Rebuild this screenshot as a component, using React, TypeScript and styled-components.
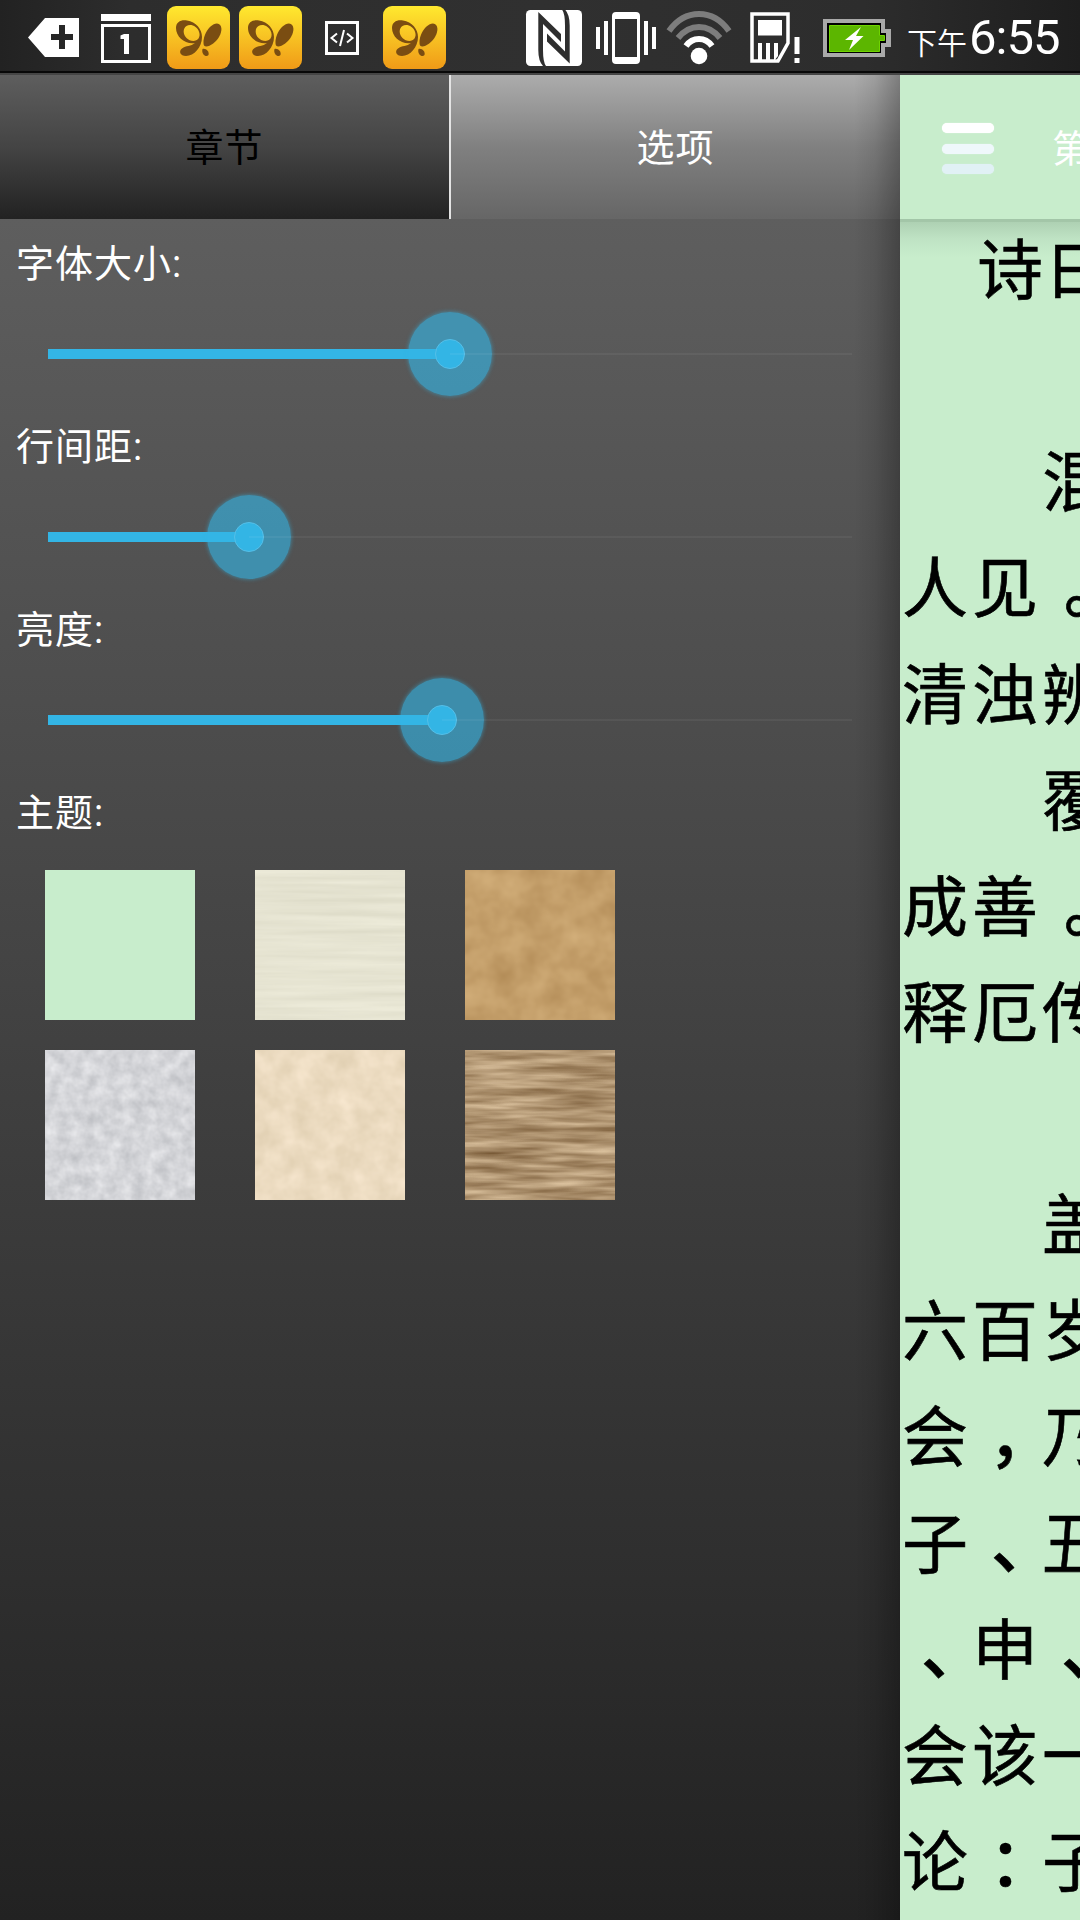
import React from "react";
import styled, { createGlobalStyle } from "styled-components";

const cjk = `Roboto, "Noto Sans CJK SC", sans-serif`;

const Global = createGlobalStyle`
  body { margin: 0; background: #262626; overflow: hidden; }
  * { box-sizing: border-box; }
`;

const Screen = styled.div`
  width: 1080px;
  height: 1920px;
  overflow: hidden;
  display: flex;
  flex-direction: column;
  font-family: ${cjk};
`;

const StatusBar = styled.header`
  height: 75px;
  flex: none;
  display: flex;
  align-items: flex-start;
  background: linear-gradient(90deg, #222 0, #2d2d2d 12%, #303030 50%, #2d2d2d 80%, #1e1e1e 100%);
  box-shadow: inset 0 -2px 0 #454545, inset 0 -4px 0 #080808;
`;

const StatusIcons = styled.svg`
  width: 900px;
  height: 75px;
  flex: none;
`;

const Clock = styled.div`
  flex: 1;
  display: flex;
  align-items: baseline;
  color: #fff;
  height: 75px;
  padding: 2px 0 0 7px;
  white-space: nowrap;
`;

const Meridiem = styled.span`
  font: 350 30px/72px ${cjk};
`;

const Time = styled.span`
  font: 400 49px/72px Roboto, sans-serif;
  letter-spacing: -1px;
  padding-left: 2px;
`;

const Main = styled.main`
  flex: 1;
  display: flex;
  min-height: 0;
`;

const Drawer = styled.aside`
  width: 900px;
  flex: none;
  display: flex;
  flex-direction: column;
  position: relative;
  background: linear-gradient(#5e5e5e 144px, #222 100%);
  &::after {
    content: "";
    position: absolute;
    inset: 0 0 0 auto;
    width: 46px;
    background: linear-gradient(90deg, transparent, rgba(0, 0, 0, 0.08) 45%, rgba(0, 0, 0, 0.27));
  }
`;

const Tabs = styled.nav`
  display: flex;
  height: 144px;
  flex: none;
`;

const Tab = styled.button<{ $active?: boolean }>`
  flex: 1;
  border: 0;
  padding: 2px 0 0;
  border-left: ${(p) => (p.$active ? "2px solid #e4e4e4" : "0")};
  background: ${(p) =>
    p.$active ? "linear-gradient(#acacac, #808080 50%, #666)" : "linear-gradient(#5e5e5e, #444 50%, #222)"};
  color: ${(p) => (p.$active ? "#fff" : "#000")};
  font: 400 38px/1 ${cjk};
  letter-spacing: 1px;
`;

const Setting = styled.section`
  height: 183px;
  flex: none;
`;

const Label = styled.h2`
  margin: 0;
  height: 91px;
  padding-left: 16px;
  color: #fff;
  font: 400 38px/90px ${cjk};
  letter-spacing: 1px;
`;

const Slider = styled.div`
  height: 88px;
  margin: 0 48px;
  display: flex;
  align-items: center;
`;

const Fill = styled.div`
  height: 10px;
  background: #33b5e5;
`;

const Rest = styled.div`
  flex: 1;
  height: 2px;
  background: rgba(255, 255, 255, 0.05);
`;

const Thumb = styled.div`
  width: 84px;
  height: 84px;
  margin: 0 -42px;
  flex: none;
  border-radius: 50%;
  display: grid;
  place-items: center;
  background: rgba(51, 181, 229, 0.62);
  box-shadow: 0 0 4px rgba(51, 181, 229, 0.6);
  &::after {
    content: "";
    width: 28px;
    height: 28px;
    border-radius: 50%;
    background: #33b5e5;
    border: 1px solid #55bfe8;
  }
`;

const Swatches = styled.div`
  display: grid;
  grid-template-columns: repeat(3, 150px);
  gap: 30px 60px;
  padding-left: 45px;
  margin-top: -81px;
`;

const Swatch = styled.svg`
  width: 150px;
  height: 150px;
  display: block;
`;

const Reader = styled.article`
  flex: 1;
  min-width: 0;
  overflow: hidden;
  background: #c8edcc;
`;

const ReaderBar = styled.div`
  height: 144px;
  display: flex;
  align-items: center;
  padding: 3px 0 0 42px;
  color: #fff;
  white-space: nowrap;
`;

const MenuIcon = styled.div`
  width: 52px;
  height: 51px;
  display: flex;
  flex-direction: column;
  justify-content: space-between;
  margin-right: 58px;
  flex: none;
`;

const MenuBar = styled.i<{ $color: string }>`
  height: 10px;
  border-radius: 5px;
  background: ${(p) => p.$color};
  box-shadow: 0 0 1px ${(p) => p.$color};
`;

const Title = styled.span`
  font: 400 38px/1 ${cjk};
  letter-spacing: 1px;
`;

const Page = styled.div`
  height: 1701px;
  background: linear-gradient(#a3c6a8 0, #a3c6a8 3px, #aed1b3 3px, #bfe3c4 20px, #c8edcc 38px);
`;

const Line = styled.p<{ $indent: number }>`
  margin: 0;
  height: 106.13px;
  padding-left: ${(p) => p.$indent}px;
  font: 400 66px/92px "Noto Sans CJK SC", sans-serif;
  -webkit-text-stroke: 0.6px #000;
  letter-spacing: 4px;
  color: #000;
  white-space: nowrap;
`;

const Mark = styled.span<{ $shift: number }>`
  display: inline-block;
  width: 70px;
  padding-left: ${(p) => p.$shift}px;
  letter-spacing: 0;
  font-feature-settings: "halt";
  font-weight: 500;
`;

const lines: [string, number][] = [
  ["诗曰", 77],
  ["", 0],
  ["混", 142],
  ["人见。", 2],
  ["清浊辨", 2],
  ["覆", 142],
  ["成善。", 2],
  ["释厄传", 2],
  ["", 0],
  ["盖", 142],
  ["六百岁", 2],
  ["会，乃", 2],
  ["子、丑", 2],
  ["、申、", 2],
  ["会该一", 2],
  ["论：子", 2],
];

const shifts: Record<string, number> = { "。": 22, "，": 16, "、": 19, "：": 17 };

const settings = [
  { label: "字体大小:", value: 50 },
  { label: "行间距:", value: 25 },
  { label: "亮度:", value: 49 },
];

const themes = [
  { id: "mint", color: "#c8edcc" },
  { id: "linen", color: "#ebe9d8", freq: "0.006 0.14", seed: 4, dark: "#c4c2ab", light: "#fbf9e8", amount: 0.4 },
  { id: "kraft", color: "#c5a06d", freq: "0.035 0.035", seed: 8, dark: "#9f7640", light: "#e9c892", amount: 0.5 },
  { id: "silver", color: "#d6d7db", freq: "0.08 0.08", seed: 3, dark: "#acaeb3", light: "#fcfcfe", amount: 0.65 },
  { id: "cream", color: "#f1e0c8", freq: "0.05 0.05", seed: 12, dark: "#d3c2a0", light: "#ffefd8", amount: 0.6 },
  { id: "wood", color: "#b79d7e", freq: "0.012 0.13", seed: 7, dark: "#6a4b28", light: "#f4dcb8", amount: 0.95 },
];

function ThemeSwatch({ theme }: { theme: (typeof themes)[number] }) {
  const rgb = (hex: string) => [1, 3, 5].map((i) => parseInt(hex.slice(i, i + 2), 16) / 255);
  if (!theme.freq) {
    return (
      <Swatch viewBox="0 0 150 150">
        <rect width="150" height="150" fill={theme.color} />
      </Swatch>
    );
  }
  const d = rgb(theme.dark!);
  const l = rgb(theme.light!);
  return (
    <Swatch viewBox="0 0 150 150">
      <filter id={theme.id} x="0" y="0" width="100%" height="100%" colorInterpolationFilters="sRGB">
        <feTurbulence type="fractalNoise" baseFrequency={theme.freq} numOctaves={3} seed={theme.seed} />
        <feColorMatrix values="1 0 0 0 0  1 0 0 0 0  1 0 0 0 0  0 0 0 0 1" />
        <feComponentTransfer>
          <feFuncR type="table" tableValues={`${d[0]} ${l[0]}`} />
          <feFuncG type="table" tableValues={`${d[1]} ${l[1]}`} />
          <feFuncB type="table" tableValues={`${d[2]} ${l[2]}`} />
        </feComponentTransfer>
      </filter>
      <rect width="150" height="150" fill={theme.color} />
      <rect width="150" height="150" filter={`url(#${theme.id})`} opacity={theme.amount} />
    </Swatch>
  );
}

function AppBadge({ x }: { x: number }) {
  return (
    <g transform={`translate(${x} 6)`}>
      <rect width="63" height="63" rx="9" fill="url(#badge)" />
      <g fill="#7a4d12">
        <path
          fillRule="evenodd"
          d="M9 22C9 16 14 13.500 20 14.500C29 16 35 23 35 31C35 41 27 50 19 50C13 50 11.500 45 15 42.500C19 39.500 24 40.500 28 37C18 38.500 9 31 9 22ZM19.500 20C15.500 22.500 16 28.500 19.500 32C23 35.500 29 36 31.500 32.500C34 29 32 23.500 28.500 21C25.500 18.700 22 18.500 19.500 20Z"
        />
        <path d="M37 39.500C34.500 33 41 18 50 17.500C55.500 18 55.500 25 52 31C48 37.500 40 42.500 37 39.500Z" />
        <path d="M35.500 43C39 42 42.500 45.500 41.500 49C39.500 52 34 48.500 35.500 43Z" />
      </g>
    </g>
  );
}

const nfcHook = "M538.300 12L561 34V42L543 24V50Q543 62 546 66H543Q538.300 61 538.300 50Z";

export default function App() {
  return (
    <Screen>
      <Global />
      <StatusBar>
        <StatusIcons viewBox="0 0 900 75" fill="none">
          <defs>
            <linearGradient id="badge" x1="0" y1="0" x2="0" y2="1">
              <stop offset="0" stopColor="#ffe92f" />
              <stop offset="1" stopColor="#f09a17" />
            </linearGradient>
          </defs>
          <path fill="#fff" fillRule="evenodd" d="M28 37.500L45 18H79V57H45ZM59 25V34H51V40H59V49H65V40H73V34H65V25Z" />
          <path fill="#fff" d="M101 14h50v7h-50z" />
          <path stroke="#fff" strokeWidth="3" d="M102.500 25.500h47v36h-47z" />
          <path fill="#fff" d="M124 34h5v20h-5v-15h-3.500v-3.500z" />
          <AppBadge x={167} />
          <AppBadge x={239} />
          <path stroke="#fff" strokeWidth="3" d="M326.500 22.500h31v31h-31z" />
          <path stroke="#fff" strokeWidth="2" d="M337 33.500l-5.500 4.500l5.500 4.500M347 33.500l5.500 4.500l-5.500 4.500M344 30l-4 16" />
          <AppBadge x={383} />
          <rect x="526" y="10" width="56" height="56" rx="4.500" fill="#fff" />
          <g fill="#2e2e2e">
            <path d={nfcHook} />
            <path d={nfcHook} transform="rotate(180 554 37.800)" />
          </g>
          <path stroke="#fff" strokeWidth="4" d="M598 27v22M606 21v34M646 21v34M654 27v22" />
          <path fill="#fff" fillRule="evenodd" d="M616 12h20q4 0 4 4v44q0 4-4 4h-20q-4 0-4-4V16q0-4 4-4ZM615 19v38h22V19Z" />
          <g strokeWidth="6">
            <path stroke="#7d7d7d" d="M669 31Q681 14 699 14Q717 14 729 31M678 38Q687 27 699 27Q711 27 720 38" />
            <path stroke="#fff" d="M686 46Q691 39 699 39Q707 39 712 46" />
          </g>
          <circle cx="699" cy="56" r="8.300" fill="#fff" />
          <path stroke="#fff" strokeWidth="3.500" d="M752 14h36v29l-10 18h-26z" />
          <path fill="#fff" d="M758 20h24v15.500h-24zM758 43h4v18h-4zM766 43h4v18h-4zM774 43h4v13l-4 5zM794.500 37h5v17h-5zM794.500 58h5v5h-5z" />
          <path fill="#a9a9a9" d="M823 19h62v10h6v18h-6v10h-62z" />
          <path fill="#000" d="M827 23h54v10h5v10h-5v10h-54z" />
          <path fill="#5cb600" stroke="#70d400" d="M829.500 25.500h50v10h5v5h-5v11h-50z" />
          <path fill="#fff" d="M861 27L845 40H853L849 50L863.500 36H856Z" />
        </StatusIcons>
        <Clock>
          <Meridiem>下午</Meridiem>
          <Time>6:55</Time>
        </Clock>
      </StatusBar>
      <Main>
        <Drawer>
          <Tabs>
            <Tab>章节</Tab>
            <Tab $active>选项</Tab>
          </Tabs>
          {settings.map((s) => (
            <Setting key={s.label}>
              <Label>{s.label}</Label>
              <Slider>
                <Fill style={{ width: `${s.value}%` }} />
                <Thumb />
                <Rest />
              </Slider>
            </Setting>
          ))}
          <Setting>
            <Label>主题:</Label>
          </Setting>
          <Swatches>
            {themes.map((t) => (
              <ThemeSwatch key={t.id} theme={t} />
            ))}
          </Swatches>
        </Drawer>
        <Reader>
          <ReaderBar>
            <MenuIcon>
              <MenuBar $color="#fff" />
              <MenuBar $color="#eff8fb" />
              <MenuBar $color="#e1f1f5" />
            </MenuIcon>
            <Title>第</Title>
          </ReaderBar>
          <Page>
            {lines.map(([text, indent], i) => (
              <Line key={i} $indent={indent}>
                {[...text].map((c, j) =>
                  shifts[c] ? (
                    <Mark key={j} $shift={shifts[c]}>
                      {c}
                    </Mark>
                  ) : (
                    c
                  ),
                )}
              </Line>
            ))}
          </Page>
        </Reader>
      </Main>
    </Screen>
  );
}
